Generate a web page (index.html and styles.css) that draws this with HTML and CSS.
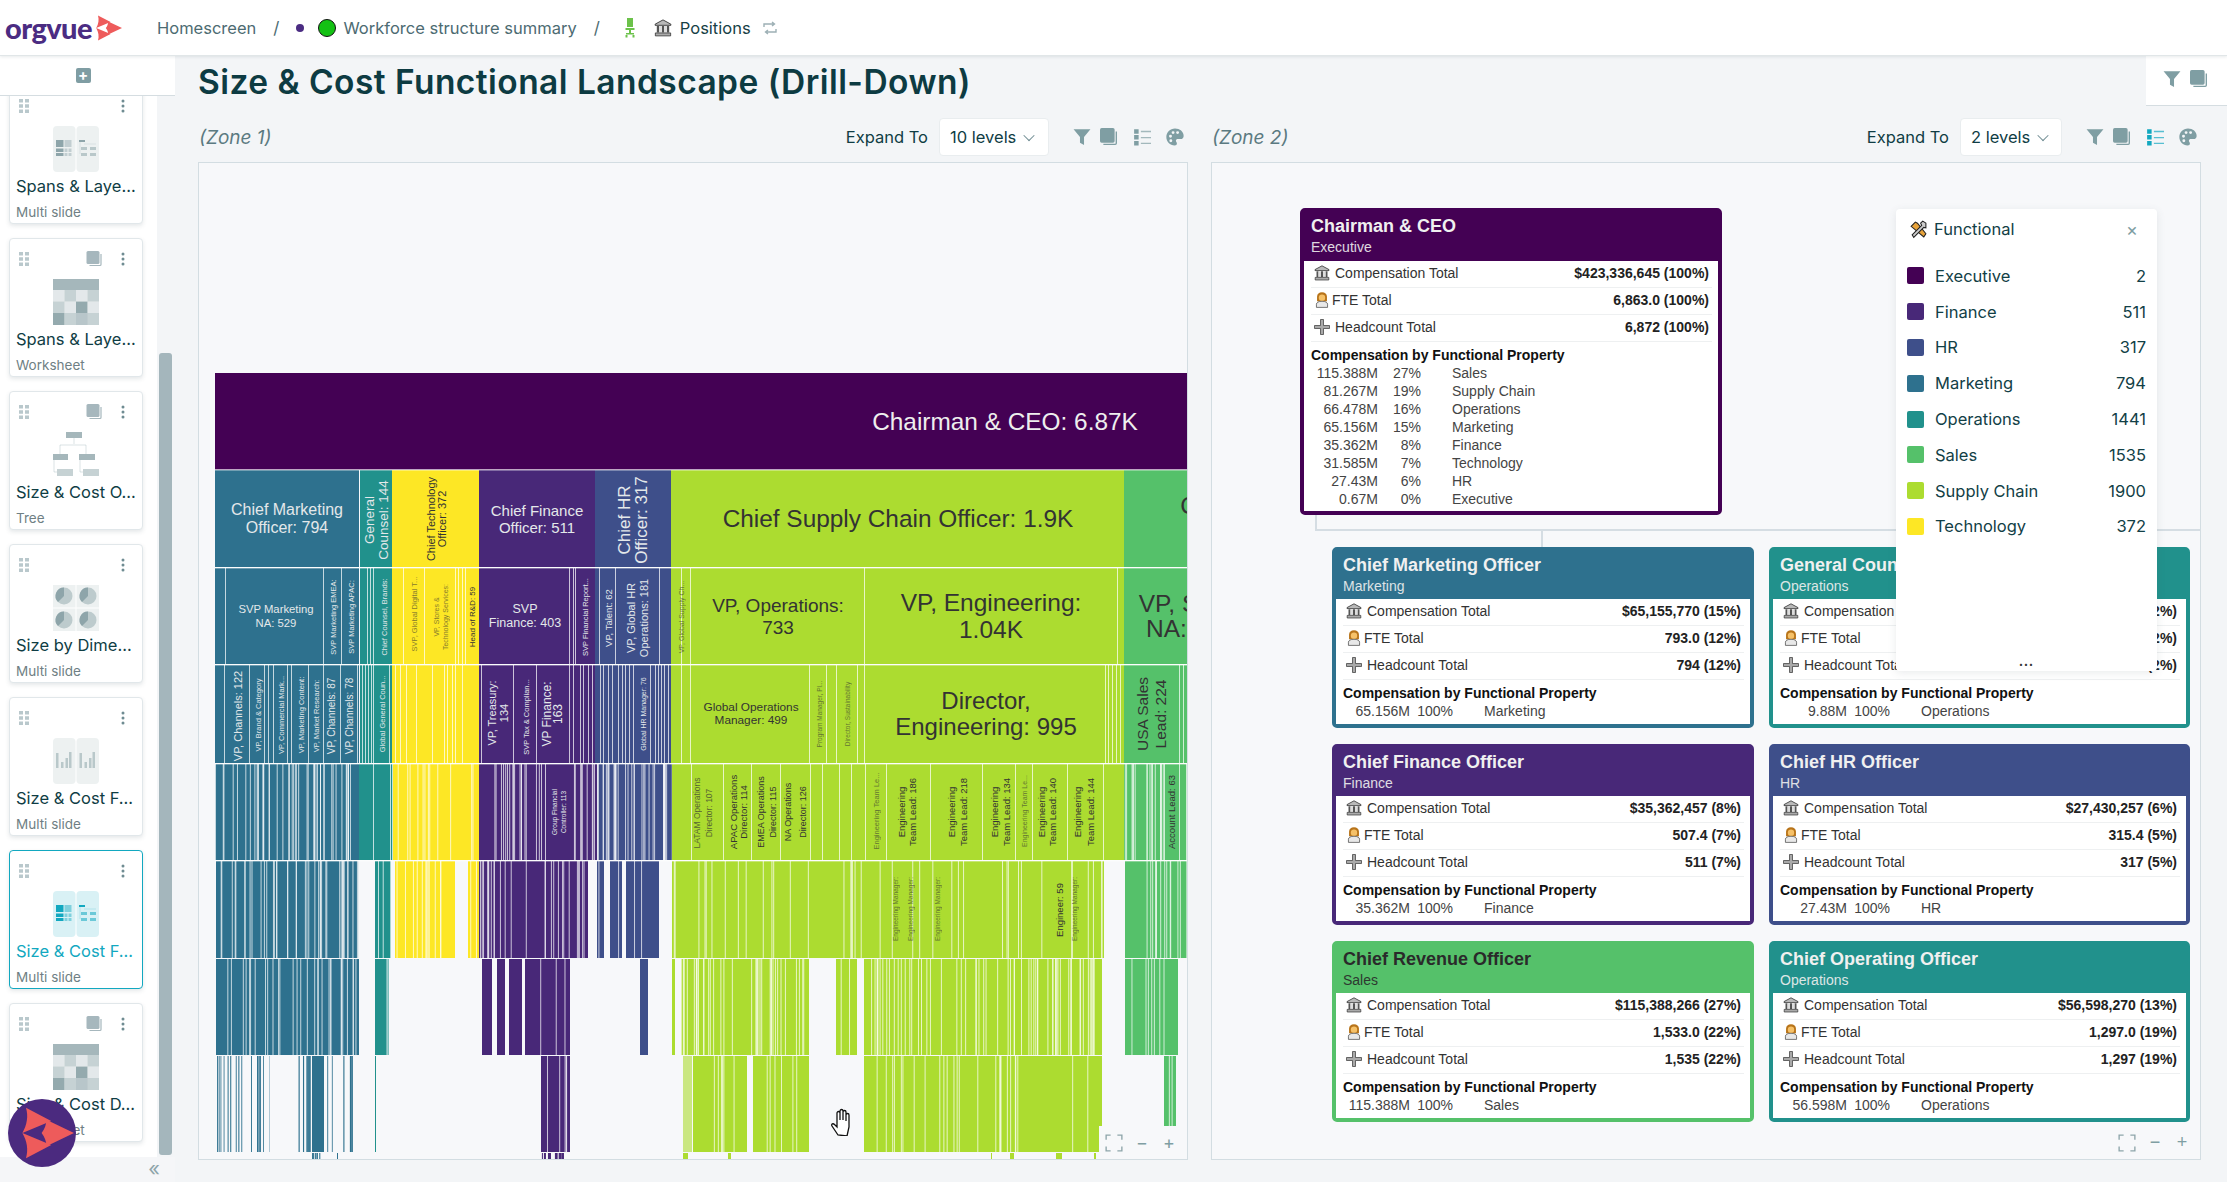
FILE: index.html
```html
<!DOCTYPE html>
<html>

<head>
	<meta charset="utf-8" />
	<title>Size &amp; Cost Functional Landscape (Drill-Down)</title>
	<link rel="stylesheet" href="styles.css">
</head>

<body>
	<svg class="defs" width="0" height="0">
		<symbol id="i-bank" viewBox="0 0 16 16">
			<path d="M8 .8 15 4.6v1H1v-1z" fill="#b9b9b9" stroke="#333" stroke-width=".8" />
			<path d="M2.5 6.3h2v5.8h-2zM7 6.3h2v5.8H7zM11.5 6.3h2v5.8h-2z" fill="#555" />
			<path d="M4.5 6.3H7v5.8H4.5zM9 6.3h2.5v5.8H9z" fill="#ddd" />
			<path d="M1.2 12.4h13.6v2.6H1.2z" fill="#aaa" stroke="#333" stroke-width=".7" />
		</symbol>
		<symbol id="i-person" viewBox="2.500 .5 11 15.500">
			<path d="M3.2 9.5V5.2C3.2 2.4 5.2.8 8 .8s4.800 1.600 4.800 4.400v4.300z" fill="#b8741a" />
			<circle cx="8" cy="6" r="3.100" fill="#f6c168" />
			<path d="M2.600 15.400v-3c0-1.800 2-2.900 5.400-2.900s5.400 1.100 5.400 2.900v3z" fill="#e8e8e8" stroke="#444" stroke-width=".7" />
		</symbol>
		<symbol id="i-plus" viewBox="0 0 16 16">
			<path d="M6.500 .5h3v6h6v3h-6v6h-3v-6h-6v-3h6z" fill="#a9a9a9" stroke="#333" stroke-width=".7" />
		</symbol>
		<symbol id="i-filter" viewBox="0 0 16 16">
			<path d="M.5 1h15L9.800 8v7L6.200 13V8z" />
		</symbol>
		<symbol id="i-copy" viewBox="0 0 16 16">
			<rect x="0" y="0" width="13" height="13" rx="1.500" />
			<path d="M14.500 3v10.500a1 1 0 0 1-1 1H3" fill="none" stroke="currentColor" stroke-width="1.200" />
		</symbol>
		<symbol id="i-list" viewBox="0 0 16 16">
			<path d="M1 1h4v4H1zM1 6.200h4v4H1zM1 11.500h4v4H1z" />
			<path d="M7 2.500h9v1.200H7zM7 8h9v1.200H7zM7 13h9v1.200H7z" opacity=".7" />
		</symbol>
		<symbol id="i-palette" viewBox="0 0 16 16">
			<path fill-rule="evenodd" d="M8 .5C3.600.5.300 3.800.300 8s3.300 7.500 7.400 7.500c1.300 0 2-.8 2-1.800 0-1.100-.9-1.500-.9-2.400 0-1 .8-1.500 1.800-1.500h2.400c1.500 0 2.700-1 2.700-2.800C15.700 3.300 12.300.5 8 .5zM4 6a1.300 1.300 0 1 0 0 2.600A1.300 1.300 0 0 0 4 6zm2.300-3.200a1.300 1.300 0 1 0 0 2.600 1.300 1.300 0 0 0 0-2.600zm4 0a1.300 1.300 0 1 0 0 2.600 1.300 1.300 0 0 0 0-2.600zm-6 7.200a1.300 1.300 0 1 0 0 2.600 1.300 1.300 0 0 0 0-2.600z" />
		</symbol>
		<symbol id="i-drag" viewBox="0 0 10 14">
			<path d="M0 0h4v3.500H0zM6 0h4v3.500H6zM0 5.300h4v3.500H0zM6 5.300h4v3.500H6zM0 10.500h4V14H0zM6 10.500h4V14H6z" />
		</symbol>
		<symbol id="i-more" viewBox="0 0 4 14">
			<circle cx="2" cy="2" r="1.500" /><circle cx="2" cy="7" r="1.500" /><circle cx="2" cy="12" r="1.500" />
		</symbol>
		<symbol id="i-mark" viewBox="0 0 100 100">
			<path d="M20 8 62 30 14 50C22 36 24 22 20 8z" />
			<path d="M14 50 62 70 20 92C24 78 22 64 14 50z" />
			<path d="M46 50c5-6 8-14 8-22l46 22-46 22c0-8-3-16-8-22z" />
		</symbol>
		<symbol id="t-multi" viewBox="0 0 46 46">
			<rect x="0" y="0" width="22.500" height="46" rx="4" class="thumb-bg" />
			<rect x="23.500" y="0" width="22.500" height="46" rx="4" class="thumb-bg" />
			<path d="M3 14h7.500v7H3zM3 22.500h7.500v3.500H3zM3 27h7.500v3H3z" />
			<path d="M11.500 14h7v7h-7zM11.500 22.500h3v3.500h-3zM15.500 22.500h3v3.500h-3zM11.500 27h3v3h-3zM15.500 27h3v3h-3z" opacity=".45" />
			<path d="M26 14h6v2h-6z" />
			<path d="M28 21h6v3h-6zM37 21h6v3h-6zM28 27h6v3h-6zM37 27h6v3h-6z" opacity=".55" />
			<path d="M27 16v12M31 18h12" stroke="currentColor" stroke-width=".5" fill="none" opacity=".4" />
		</symbol>
		<symbol id="t-grid" viewBox="0 0 46 46">
			<path d="M0 0h46v11H0z" opacity=".8" />
			<path d="M11.500 11H23v11.500H11.500zM34.500 11H46v11.500H34.500zM0 22.500h11.500V34H0zM11.500 34H0M23 34h11.500v12H23zM34.500 34H46v12H34.500zM11.500 34H23v12H11.500z" opacity=".5" />
			<path d="M0 11h11.500v11.500H0zM23 11h11.500v11.500H23zM11.500 22.500H23V34H11.500zM34.500 22.500H46V34H34.500zM23 34h11.500v12H23z" opacity=".25" />
			<path d="M23 22.500h11.500V34H23zM0 34h11.500v12H0z" opacity=".95" />
		</symbol>
		<symbol id="t-tree" viewBox="0 0 46 46">
			<path d="M13 0h16v6H13zM0 22h15v6H0zM26 22h16v6H26z" opacity=".8" />
			<path d="M4 37h16v7H4zM30 37h16v7H30z" opacity=".5" />
			<path d="M21 6v6M7 22v-9h26v9M1 28v12h3M27 28v12h3" fill="none" stroke="currentColor" stroke-width=".8" opacity=".4" />
		</symbol>
		<symbol id="t-pies" viewBox="0 0 46 46">
			<rect x="0" y="0" width="22.500" height="22.500" class="thumb-bg" />
			<rect x="23.500" y="0" width="22.500" height="22.500" class="thumb-bg" />
			<rect x="0" y="23.500" width="22.500" height="22.500" class="thumb-bg" />
			<rect x="23.500" y="23.500" width="22.500" height="22.500" class="thumb-bg" />
			<circle cx="11" cy="11" r="8.500" opacity=".5" /><path d="M11 11V2.500A8.500 8.500 0 0 0 5 17z" />
			<circle cx="35" cy="11" r="8.500" opacity=".5" /><path d="M35 11V2.500A8.500 8.500 0 0 0 29 17z" />
			<circle cx="11" cy="35" r="8.500" opacity=".5" /><path d="M11 35V26.500A8.500 8.500 0 0 0 5 41z" />
			<circle cx="35" cy="35" r="8.500" opacity=".5" /><path d="M35 35V26.500A8.500 8.500 0 0 0 29 41z" />
		</symbol>
		<symbol id="t-bars" viewBox="0 0 46 46">
			<rect x="0" y="0" width="22.500" height="46" rx="4" class="thumb-bg" />
			<rect x="23.500" y="0" width="22.500" height="46" rx="4" class="thumb-bg" />
			<path d="M3 15h2.500v15H3zM8 24h2.500v6H8zM12.500 20H15v10h-2.500zM16 14h2.500v16H16z" opacity=".55" />
			<path d="M26.500 15H29v15h-2.500zM31.500 24H34v6h-2.500zM36 20h2.500v10H36zM39.500 14H42v16h-2.500z" opacity=".55" />
		</symbol>
	</svg>

	<header class="topbar">
		<div class="logo">
			<span class="logo-name">orgvue</span>
			<svg class="logo-mark"><use href="#i-mark" /></svg>
		</div>
		<nav class="crumbs">
			<span class="crumb">Homescreen</span>
			<span class="slash">/</span>
			<span class="dot"></span>
			<span class="green"></span>
			<span class="crumb crumb-tight">Workforce structure summary</span>
			<span class="slash">/</span>
			<svg class="chair" viewBox="0 0 12 20"><path d="M3 0h6v9H3zM1.500 10h9v2h-9zM5 12h2v3H5zM2 15h8v1.500H2zM1.500 17h2v2.500h-2zM8.500 17h2v2.500h-2z" /></svg>
			<svg class="bank"><use href="#i-bank" /></svg>
			<span class="crumb-now">Positions</span>
			<svg class="refresh" viewBox="0 0 16 16"><path d="M2 7V4h10M10 2l2.500 2L10 6M14 9v3H4M6 10l-2.500 2L6 14" /></svg>
		</nav>
	</header>

	<div class="page">
		<aside class="sidebar">
			<div class="add-row"><span class="add-btn">+</span></div>
			<div class="side-scroll">
				<div class="cards">
					<div class="card">
						<div class="card-top"><svg class="drag"><use href="#i-drag" /></svg><svg class="more"><use href="#i-more" /></svg></div>
						<svg class="thumb"><use href="#t-multi" /></svg>
						<div class="card-name">Spans &amp; Laye...</div>
						<div class="card-type">Multi slide</div>
					</div>
					<div class="card">
						<div class="card-top"><svg class="drag"><use href="#i-drag" /></svg><svg class="dup"><use href="#i-copy" /></svg><svg class="more"><use href="#i-more" /></svg></div>
						<svg class="thumb"><use href="#t-grid" /></svg>
						<div class="card-name">Spans &amp; Laye...</div>
						<div class="card-type">Worksheet</div>
					</div>
					<div class="card">
						<div class="card-top"><svg class="drag"><use href="#i-drag" /></svg><svg class="dup"><use href="#i-copy" /></svg><svg class="more"><use href="#i-more" /></svg></div>
						<svg class="thumb"><use href="#t-tree" /></svg>
						<div class="card-name">Size &amp; Cost O...</div>
						<div class="card-type">Tree</div>
					</div>
					<div class="card">
						<div class="card-top"><svg class="drag"><use href="#i-drag" /></svg><svg class="more"><use href="#i-more" /></svg></div>
						<svg class="thumb"><use href="#t-pies" /></svg>
						<div class="card-name">Size by Dime...</div>
						<div class="card-type">Multi slide</div>
					</div>
					<div class="card">
						<div class="card-top"><svg class="drag"><use href="#i-drag" /></svg><svg class="more"><use href="#i-more" /></svg></div>
						<svg class="thumb"><use href="#t-bars" /></svg>
						<div class="card-name">Size &amp; Cost F...</div>
						<div class="card-type">Multi slide</div>
					</div>
					<div class="card on">
						<div class="card-top"><svg class="drag"><use href="#i-drag" /></svg><svg class="more"><use href="#i-more" /></svg></div>
						<svg class="thumb"><use href="#t-multi" /></svg>
						<div class="card-name">Size &amp; Cost F...</div>
						<div class="card-type">Multi slide</div>
					</div>
					<div class="card">
						<div class="card-top"><svg class="drag"><use href="#i-drag" /></svg><svg class="dup"><use href="#i-copy" /></svg><svg class="more"><use href="#i-more" /></svg></div>
						<svg class="thumb"><use href="#t-grid" /></svg>
						<div class="card-name">Size &amp; Cost D...</div>
						<div class="card-type">Worksheet</div>
					</div>
				</div>
				<div class="track"><div class="thumb-bar"></div></div>
			</div>
			<div class="side-foot">«</div>
			<div class="fab"><svg><use href="#i-mark" /></svg></div>
		</aside>

		<main class="main">
			<h1 class="title">Size &amp; Cost Functional Landscape (Drill-Down)</h1>
			<div class="corner-tab">
				<svg class="tool"><use href="#i-filter" /></svg>
				<svg class="tool"><use href="#i-copy" /></svg>
			</div>
			<div class="zones">
				<section class="zone">
					<div class="zone-head">
						<em class="zone-name">(Zone 1)</em>
						<span class="expand">Expand To</span>
						<span class="select">10 levels<i class="chev"></i></span>
						<div class="tools">
							<svg class="tool"><use href="#i-filter" /></svg>
							<svg class="tool copy"><use href="#i-copy" /></svg>
							<svg class="tool"><use href="#i-list" /></svg>
							<svg class="tool"><use href="#i-palette" /></svg>
						</div>
					</div>
					<div class="panel">
						<svg id="icicle" class="icicle" viewBox="199 163 988 996"></svg>
						<svg class="hand" viewBox="0 0 28 28"><path d="M9 27 3 18c-1-2 1-3 2.500-1.500L8 19V5c0-2 3-2 3 0v7-9c0-2 3-2 3 0v9-8c0-2 3-2 3 0v9-6c0-2 3-2 3 0v12l-2 9z" /></svg>
						<div class="zoom-box">
							<svg class="fit" viewBox="0 0 16 16"><path d="M1 5V1h4M11 1h4v4M15 11v4h-4M5 15H1v-4" /></svg>
							<span>−</span><span>+</span>
						</div>
					</div>
				</section>

				<section class="zone">
					<div class="zone-head">
						<em class="zone-name">(Zone 2)</em>
						<span class="expand">Expand To</span>
						<span class="select select-sm">2 levels<i class="chev"></i></span>
						<div class="tools">
							<svg class="tool"><use href="#i-filter" /></svg>
							<svg class="tool copy"><use href="#i-copy" /></svg>
							<svg class="tool active"><use href="#i-list" /></svg>
							<svg class="tool"><use href="#i-palette" /></svg>
						</div>
					</div>
					<div class="panel org">
						<div class="link link-v link-root"></div>
						<div class="link link-h"></div>
						<div class="link link-v link-a"></div>
						<div class="link link-v link-b"></div>

						<div class="node root c-exec">
							<div class="node-head"><b>Chairman &amp; CEO</b><span>Executive</span></div>
							<div class="node-body">
								<div class="row"><svg class="ico"><use href="#i-bank" /></svg><span class="lab">Compensation Total</span><b>$423,336,645 (100%)</b></div>
								<div class="row"><svg class="ico"><use href="#i-person" /></svg><span class="lab fte">FTE Total</span><b>6,863.0 (100%)</b></div>
								<div class="row"><svg class="ico"><use href="#i-plus" /></svg><span class="lab">Headcount Total</span><b>6,872 (100%)</b></div>
								<div class="split">
									<b class="split-title">Compensation by Functional Property</b>
									<span>115.388M</span><span>27%</span><span>Sales</span>
									<span>81.267M</span><span>19%</span><span>Supply Chain</span>
									<span>66.478M</span><span>16%</span><span>Operations</span>
									<span>65.156M</span><span>15%</span><span>Marketing</span>
									<span>35.362M</span><span>8%</span><span>Finance</span>
									<span>31.585M</span><span>7%</span><span>Technology</span>
									<span>27.43M</span><span>6%</span><span>HR</span>
									<span>0.67M</span><span>0%</span><span>Executive</span>
								</div>
							</div>
						</div>

						<div class="node-grid">
							<div class="node c-mark">
								<div class="node-head"><b>Chief Marketing Officer</b><span>Marketing</span></div>
								<div class="node-body">
									<div class="row"><svg class="ico"><use href="#i-bank" /></svg><span class="lab">Compensation Total</span><b>$65,155,770 (15%)</b></div>
									<div class="row"><svg class="ico"><use href="#i-person" /></svg><span class="lab fte">FTE Total</span><b>793.0 (12%)</b></div>
									<div class="row"><svg class="ico"><use href="#i-plus" /></svg><span class="lab">Headcount Total</span><b>794 (12%)</b></div>
									<div class="split"><b class="split-title">Compensation by Functional Property</b><span>65.156M</span><span>100%</span><span>Marketing</span></div>
								</div>
							</div>
							<div class="node c-oper">
								<div class="node-head"><b>General Counsel</b><span>Operations</span></div>
								<div class="node-body">
									<div class="row"><svg class="ico"><use href="#i-bank" /></svg><span class="lab">Compensation Total</span><b>$9,880,000 (2%)</b></div>
									<div class="row"><svg class="ico"><use href="#i-person" /></svg><span class="lab fte">FTE Total</span><b>144.0 (2%)</b></div>
									<div class="row"><svg class="ico"><use href="#i-plus" /></svg><span class="lab">Headcount Total</span><b>144 (2%)</b></div>
									<div class="split"><b class="split-title">Compensation by Functional Property</b><span>9.88M</span><span>100%</span><span>Operations</span></div>
								</div>
							</div>
							<div class="node c-fin">
								<div class="node-head"><b>Chief Finance Officer</b><span>Finance</span></div>
								<div class="node-body">
									<div class="row"><svg class="ico"><use href="#i-bank" /></svg><span class="lab">Compensation Total</span><b>$35,362,457 (8%)</b></div>
									<div class="row"><svg class="ico"><use href="#i-person" /></svg><span class="lab fte">FTE Total</span><b>507.4 (7%)</b></div>
									<div class="row"><svg class="ico"><use href="#i-plus" /></svg><span class="lab">Headcount Total</span><b>511 (7%)</b></div>
									<div class="split"><b class="split-title">Compensation by Functional Property</b><span>35.362M</span><span>100%</span><span>Finance</span></div>
								</div>
							</div>
							<div class="node c-hr">
								<div class="node-head"><b>Chief HR Officer</b><span>HR</span></div>
								<div class="node-body">
									<div class="row"><svg class="ico"><use href="#i-bank" /></svg><span class="lab">Compensation Total</span><b>$27,430,257 (6%)</b></div>
									<div class="row"><svg class="ico"><use href="#i-person" /></svg><span class="lab fte">FTE Total</span><b>315.4 (5%)</b></div>
									<div class="row"><svg class="ico"><use href="#i-plus" /></svg><span class="lab">Headcount Total</span><b>317 (5%)</b></div>
									<div class="split"><b class="split-title">Compensation by Functional Property</b><span>27.43M</span><span>100%</span><span>HR</span></div>
								</div>
							</div>
							<div class="node c-sales">
								<div class="node-head"><b>Chief Revenue Officer</b><span>Sales</span></div>
								<div class="node-body">
									<div class="row"><svg class="ico"><use href="#i-bank" /></svg><span class="lab">Compensation Total</span><b>$115,388,266 (27%)</b></div>
									<div class="row"><svg class="ico"><use href="#i-person" /></svg><span class="lab fte">FTE Total</span><b>1,533.0 (22%)</b></div>
									<div class="row"><svg class="ico"><use href="#i-plus" /></svg><span class="lab">Headcount Total</span><b>1,535 (22%)</b></div>
									<div class="split"><b class="split-title">Compensation by Functional Property</b><span>115.388M</span><span>100%</span><span>Sales</span></div>
								</div>
							</div>
							<div class="node c-oper">
								<div class="node-head"><b>Chief Operating Officer</b><span>Operations</span></div>
								<div class="node-body">
									<div class="row"><svg class="ico"><use href="#i-bank" /></svg><span class="lab">Compensation Total</span><b>$56,598,270 (13%)</b></div>
									<div class="row"><svg class="ico"><use href="#i-person" /></svg><span class="lab fte">FTE Total</span><b>1,297.0 (19%)</b></div>
									<div class="row"><svg class="ico"><use href="#i-plus" /></svg><span class="lab">Headcount Total</span><b>1,297 (19%)</b></div>
									<div class="split"><b class="split-title">Compensation by Functional Property</b><span>56.598M</span><span>100%</span><span>Operations</span></div>
								</div>
							</div>
						</div>

						<div class="legend">
							<div class="legend-head">
								<svg class="tools-ico" viewBox="0 0 18 18">
									<path d="M2 6 6 2l2 1 8 10-2 3z" fill="#e8a33a" stroke="#222" stroke-width="1" />
									<path d="M16 3 13 1l-2 2 1 2L3 14l1.500 2.500L14 7l2 .5z" fill="#ccc" stroke="#222" stroke-width="1" />
								</svg>
								<span>Functional</span>
								<span class="legend-x">×</span>
							</div>
							<div class="legend-row"><i class="sw c-exec"></i><span>Executive</span><span class="num">2</span></div>
							<div class="legend-row"><i class="sw c-fin"></i><span>Finance</span><span class="num">511</span></div>
							<div class="legend-row"><i class="sw c-hr"></i><span>HR</span><span class="num">317</span></div>
							<div class="legend-row"><i class="sw c-mark"></i><span>Marketing</span><span class="num">794</span></div>
							<div class="legend-row"><i class="sw c-oper"></i><span>Operations</span><span class="num">1441</span></div>
							<div class="legend-row"><i class="sw c-sales"></i><span>Sales</span><span class="num">1535</span></div>
							<div class="legend-row"><i class="sw c-supply"></i><span>Supply Chain</span><span class="num">1900</span></div>
							<div class="legend-row"><i class="sw c-tech"></i><span>Technology</span><span class="num">372</span></div>
							<div class="legend-more">•••</div>
						</div>

						<div class="zoom-box">
							<svg class="fit" viewBox="0 0 16 16"><path d="M1 5V1h4M11 1h4v4M15 11v4h-4M5 15H1v-4" /></svg>
							<span>−</span><span>+</span>
						</div>
					</div>
				</section>
			</div>
		</main>
	</div>
	<script src="chart.js"></script>
</body>

</html>
```

FILE: styles.css
```css
* {
	box-sizing: border-box;
	padding: 0;
	margin: 0;
}

html,
body {
	width: 2227px;
	height: 1182px;
	overflow: hidden;
}

body {
	background: #f3f5f7;
	font-family: Inter, "Liberation Sans", sans-serif;
	color: #0f3d44;
}

.defs {
	position: absolute;
}

.thumb-bg {
	opacity: .16;
}

/* top bar */
.topbar {
	display: flex;
	align-items: center;
	height: 56px;
	background: #fff;
	border-bottom: 1px solid #e1e6e8;
	box-shadow: 0 1px 3px rgba(60, 80, 90, .12);
	position: relative;
	z-index: 3;
}

.logo {
	display: flex;
	align-items: center;
	width: 157px;
	padding-left: 5px;
}

.logo-name {
	font-family: Lato, sans-serif;
	font-weight: 900;
	font-size: 29px;
	letter-spacing: -.6px;
	color: #4b2c82;
}

.logo-mark {
	width: 30px;
	height: 30px;
	fill: #ee5b5b;
}

.crumbs {
	display: flex;
	align-items: center;
	font-size: 16.500px;
	color: #4d6b72;
}

.slash {
	margin: 0 17px;
	font-size: 17px;
}

.dot {
	width: 8px;
	height: 8px;
	border-radius: 50%;
	background: #4b2c82;
	margin-right: 14px;
}

.green {
	width: 18px;
	height: 18px;
	border-radius: 50%;
	background: #14c114;
	border: 1px solid #111;
	margin-right: 7px;
}

.chair {
	width: 12px;
	height: 20px;
	fill: #6cc24a;
	margin: 0 18px 0 7px;
}

.bank {
	width: 18px;
	height: 20px;
	margin-right: 8px;
}

.crumb-now {
	color: #173f46;
}

.refresh {
	width: 16px;
	height: 16px;
	margin-left: 11px;
	fill: none;
	stroke: #9db0b5;
	stroke-width: 1.4;
}

/* sidebar */
.page {
	display: flex;
	height: 1126px;
}

.sidebar {
	position: relative;
	width: 175px;
	display: flex;
	flex-direction: column;
	flex-shrink: 0;
	background: #fff;
}

.add-row {
	height: 40px;
	border-bottom: 1px solid #d5dde1;
	display: flex;
	align-items: center;
	justify-content: center;
	padding-right: 9px;
	position: relative;
	z-index: 1;
	background: #fff;
}

.add-btn {
	width: 15px;
	height: 15px;
	border-radius: 2px;
	background: #7f9da3;
	color: #fff;
	font-size: 15px;
	line-height: 14px;
	font-weight: 700;
	text-align: center;
}

.side-scroll {
	display: flex;
	height: 1061px;
	overflow: hidden;
}

.cards {
	width: 157px;
	padding-left: 9px;
	margin-top: -11px;
	flex-shrink: 0;
}

.card {
	width: 134px;
	height: 139px;
	margin-bottom: 14px;
	padding: 12px 16px 0 6px;
	background: #fff;
	border: 1px solid #e1e7ea;
	border-radius: 4px;
	box-shadow: 0 2px 4px rgba(70, 90, 100, .14);
	color: #8ea5aa;
}

.card.on {
	border-color: #12a8c0;
	color: #12a8c0;
}

.card-top {
	display: flex;
	align-items: center;
	height: 16px;
}

.drag {
	width: 10px;
	height: 14px;
	margin-left: 3px;
	fill: #b9c8cc;
}

.dup {
	width: 17px;
	height: 16px;
	margin-left: auto;
	fill: #a6b7bd;
	color: #a6b7bd;
}

.more {
	width: 4px;
	height: 14px;
	margin-left: auto;
	margin-right: 1px;
	fill: #6f8c92;
}

.dup + .more {
	margin-left: 18px;
}

.thumb {
	display: block;
	width: 46px;
	height: 46px;
	margin: 12px auto 0 37px;
	fill: currentColor;
}

.card-name {
	margin-top: 4px;
	font-size: 16.500px;
	line-height: 20px;
	color: #0f3d44;
	white-space: nowrap;
}

.card.on .card-name {
	color: #12a8c0;
}

.card-type {
	margin-top: 8px;
	font-size: 13.500px;
	line-height: 16px;
	color: #6f7f84;
}

.track {
	width: 18px;
	padding: 257px 2px 0;
	background: #f3f5f7;
}

.thumb-bar {
	width: 13px;
	height: 802px;
	background: #a4b6bc;
	border-radius: 3px;
}

.side-foot {
	height: 25px;
	background: #f5f6f8;
	color: #8ea5aa;
	font-size: 20px;
	line-height: 25px;
	text-align: right;
	padding-right: 15px;
}

.fab {
	position: absolute;
	left: 8px;
	bottom: 15px;
	width: 68px;
	height: 68px;
	border-radius: 50%;
	background: #4b2a7f;
	padding: 4px 2px 4px 6px;
	fill: #ee5b5b;
}

.fab svg {
	display: block;
	width: 60px;
	height: 60px;
}

/* main */
.main {
	position: relative;
	flex: 1;
	padding: 0 26px 0 23px;
}

.title {
	height: 62px;
	padding-top: 6px;
	font-size: 33.500px;
	line-height: 40px;
	font-weight: 600;
	letter-spacing: .45px;
	color: #0d3b42;
}

.corner-tab {
	position: absolute;
	right: 0;
	top: 0;
	width: 81px;
	height: 50px;
	background: #fff;
	border-bottom: 1px solid #d5dde1;
	display: flex;
	gap: 9px;
	padding: 14px 0 0 17px;
}

.zones {
	display: grid;
	grid-template-columns: 990px 990px;
	gap: 23px;
}

.zone-head {
	display: flex;
	align-items: center;
	height: 38px;
	margin-bottom: 6px;
	padding-right: 4px;
}

.zone-name {
	margin-right: auto;
	margin-left: 1px;
	font-size: 19px;
	color: #5b7a81;
}

.expand {
	font-size: 16.500px;
	margin-right: 11px;
}

.select {
	display: flex;
	align-items: center;
	width: 110px;
	height: 38px;
	padding-left: 10px;
	background: #fff;
	border: 1px solid #e9edef;
	border-radius: 4px;
	font-size: 16.500px;
}

.select-sm {
	width: 102px;
}

.chev {
	width: 8px;
	height: 8px;
	margin-left: 9px;
	border-right: 1px solid #6f8c92;
	border-bottom: 1px solid #6f8c92;
	transform: rotate(45deg) translate(-1px, -1px);
}

.tools {
	display: flex;
	margin-left: 9px;
}

.tool {
	width: 18px;
	height: 18px;
	margin-left: 15px;
	fill: #7f9ea3;
	color: #7f9ea3;
}

.tool.copy {
	margin-left: 9px;
}

.tool.active {
	fill: #12a8c0;
	color: #12a8c0;
}

.corner-tab .tool {
	margin-left: 0;
}

.panel {
	position: relative;
	height: 998px;
	background: #f7f8fa;
	border: 1px solid #d3dde2;
	overflow: hidden;
}

.icicle {
	display: block;
	width: 988px;
	height: 996px;
	font-family: "Liberation Sans", Arial, sans-serif;
}

.hand {
	position: absolute;
	left: 630px;
	top: 945px;
	width: 28px;
	height: 28px;
	fill: #fff;
	stroke: #111;
	stroke-width: 1.3;
}

.zoom-box {
	position: absolute;
	right: 0;
	bottom: 0;
	display: flex;
	align-items: center;
	width: 88px;
	height: 33px;
	padding-left: 6px;
	gap: 15px;
	background: #f7f8fa;
	color: #7f9ea3;
	font-size: 18px;
}

.zoom-box span {
	width: 12px;
	text-align: center;
}

.fit {
	width: 18px;
	height: 18px;
	margin-right: -2px;
	fill: none;
	stroke: #8ea5aa;
	stroke-width: 1.2;
}

/* org tree */
.org {
	font-family: "Liberation Sans", Arial, sans-serif;
	color: #333;
}

.link {
	position: absolute;
	background: #d5dde3;
}

.link-v {
	width: 2px;
}

.link-root {
	left: 103px;
	top: 350px;
	height: 17px;
}

.link-h {
	left: 103px;
	right: 0;
	top: 366px;
	height: 2px;
}

.link-a {
	left: 329px;
	top: 366px;
	height: 18px;
}

.link-b {
	left: 767px;
	top: 366px;
	height: 18px;
}

.node {
	position: relative;
	display: flex;
	flex-direction: column;
	border: 4px solid var(--c);
	border-radius: 5px;
	background: var(--c);
	color: #f0f0f0;
}

.root {
	width: 422px;
	height: 307px;
	margin: 45px 0 0 88px;
}

.node-grid {
	display: grid;
	grid-template-columns: 422px 421px;
	grid-auto-rows: 181px;
	gap: 16px 15px;
	margin: 32px 0 0 120px;
}

.c-exec { --c: #440154; background: #440154; }
.c-fin { --c: #482878; background: #482878; }
.c-hr { --c: #3e4f8a; background: #3e4f8a; }
.c-mark { --c: #2e718e; background: #2e718e; }
.c-oper { --c: #21918c; background: #21918c; }
.c-sales { --c: #55c16a; background: #55c16a; color: #2a2a2a; }
.c-supply { --c: #acdc30; background: #acdc30; }
.c-tech { --c: #fde725; background: #fde725; }

.node-head {
	display: flex;
	flex-direction: column;
	height: 48px;
	padding: 4px 0 0 7px;
}

.root .node-head {
	height: 49px;
}

.node-head b {
	font-size: 18px;
	line-height: 21px;
}

.node-head span {
	font-size: 14px;
	line-height: 20px;
	opacity: .9;
}

.node-body {
	flex: 1;
	padding: 0 6px 0 7px;
	background: #fff;
	color: #333;
	font-size: 14px;
}

.row {
	display: flex;
	align-items: center;
	height: 27px;
	padding: 0 3px 2px;
	border-bottom: 1px solid #eef0f1;
}

.row b {
	margin-left: auto;
	color: #222;
}

.ico {
	width: 16px;
	height: 16px;
	flex-shrink: 0;
	margin-right: 5px;
}

.lab.fte {
	margin-left: -3px;
}

.split {
	display: grid;
	grid-template-columns: 67px 43px auto;
	padding-top: 4px;
	line-height: 18px;
	color: #444;
}

.split-title {
	grid-column: 1 / -1;
	color: #111;
}

.split span:nth-of-type(3n + 1),
.split span:nth-of-type(3n + 2) {
	text-align: right;
}

.split span:nth-of-type(3n) {
	padding-left: 31px;
}

.legend {
	position: absolute;
	left: 684px;
	top: 46px;
	display: flex;
	flex-direction: column;
	width: 261px;
	height: 462px;
	padding: 0 11px;
	background: #fff;
	border-radius: 4px;
	box-shadow: 0 2px 8px rgba(70, 90, 100, .12);
	font-family: Inter, "Liberation Sans", sans-serif;
	font-size: 16.500px;
	color: #124046;
	z-index: 2;
}

.legend-head {
	display: flex;
	align-items: center;
	height: 49px;
	padding: 0 0 9px 2px;
	flex-shrink: 0;
}

.tools-ico {
	width: 19px;
	height: 19px;
	margin-right: 6px;
}

.legend-x {
	margin-left: auto;
	margin-right: 8px;
	color: #7f9ea3;
	font-size: 18px;
}

.legend-row {
	display: flex;
	align-items: center;
	height: 35.800px;
	flex-shrink: 0;
}

.sw {
	width: 17px;
	height: 17px;
	border-radius: 2px;
	margin-right: 11px;
}

.num {
	margin-left: auto;
}

.legend-more {
	margin-top: auto;
	padding-bottom: 1px;
	text-align: center;
	font-size: 7px;
	letter-spacing: 1px;
	line-height: 10px;
	color: #333;
}
```

FILE: chart.js
```js
// icicle chart of the org, coordinates are page pixels
var colors = {
	e: "#440154", f: "#482878", h: "#3e4f8a", m: "#2e718e",
	o: "#21918c", r: "#55c16a", s: "#acdc30", t: "#fde725"
}
var L = "#e4e8ea"
var D = "#333"
var seed = 7

function rnd() {
	seed = (seed * 16807) % 2147483647
	return seed / 2147483647
}

function rect(x0, x1, y0, y1, fill, op) {
	return '<rect x="' + x0 + '" y="' + y0 + '" width="' + (x1 - x0) + '" height="' + (y1 - y0) + '" fill="' + fill + '"' + (op ? ' opacity="' + op + '"' : '') + '/>'
}

// block = [x0, x1, colour, dividers], dividers is a list of x or a count of random ones
function block(b, y0, y1) {
	var out = rect(b[0], b[1], y0, y1, colors[b[2]])
	var div = b[3] || []
	if (typeof div == "number") {
		var n = div
		div = []
		for (var i = 0; i < n; i++) {
			div.push(b[0] + rnd() * (b[1] - b[0]))
		}
	}
	for (var j = 0; j < div.length; j++) {
		out += rect(div[j], div[j] + 1, y0, y1, "#fff", .72)
	}
	return out
}

// thin separate bars of a colour, no block behind
function bars(x0, x1, y0, y1, c, n, w) {
	var out = ""
	for (var i = 0; i < n; i++) {
		var x = x0 + rnd() * (x1 - x0)
		out += rect(x, Math.min(x + .8 + rnd() * w, x1), y0, y1, colors[c])
	}
	return out
}

var rows = [
	[470, 567, [[215, 359, "m"], [360, 392, "o"], [392, 479, "t"], [479, 595, "f"], [595, 671, "h"], [671, 1124, "s"], [1124, 1188, "r"]]],
	[568, 664, [
		[215, 359, "m", [225, 323, 341]], [360, 392, "o", [367, 370, 373]],
		[392, 479, "t", [403, 424, 455, 458, 462, 465]], [479, 595, "f", [569, 573, 575]],
		[595, 671, "h", [599, 615, 659]], [671, 1124, "s", [681, 690, 864, 1117]], [1124, 1188, "r"]
	]],
	[665, 763, [
		[215, 359, "m", [224, 249, 264, 268, 273, 287, 291, 308, 323, 340, 357]], [360, 392, "o", [362, 365, 368, 371, 373, 389]],
		[392, 479, "t", [395, 400, 406, 416, 432, 444, 447, 452, 455, 462]],
		[479, 595, "f", [481, 513, 536, 569, 573, 580, 583, 588, 592]],
		[595, 671, "h", [600, 603, 608, 612, 618, 622, 625, 629, 633, 650, 655, 658, 661, 664, 668]],
		[671, 1124, "s", [681, 690, 809, 826, 836, 857, 864, 1105, 1108, 1112, 1116, 1120]],
		[1124, 1188, "r", [1179, 1183, 1187]]
	]],
	[764, 860, [
		[215, 359, "m", 46], [359, 393, "o", [373, 390, 392]], [393, 479, "t", 12],
		[479, 545, "f", 18], [545, 572, "f", [545]], [572, 597, "f", 9], [597, 672, "h", 34],
		[672, 1124, "s", [691, 723, 751, 780, 810, 822, 839, 851, 865, 886, 930, 982, 1015, 1032, 1067, 1103]],
		[1124, 1164, "r", 16], [1164, 1188, "r", [1164, 1179, 1186]]
	]],
	[861, 958, [
		[216, 359, "m", 42], [375, 391, "o", 3], [395, 455, "t", 12], [468, 479, "t", 2], [479, 588, "f", 26],
		[597, 604, "h", 1], [610, 622, "h", 1], [626, 659, "h", 2],
		[672, 1104, "s", 40], [1125, 1187, "r", 14]
	]],
	[959, 1055, [
		[216, 359, "m", 30], [375, 389, "o", 2], [482, 492, "f"], [497, 505, "f"], [509, 522, "f"], [525, 570, "f", 3], [640, 648, "h"],
		[672, 675, "s"], [681, 809, "s", 36], [836, 857, "s", 2], [864, 1102, "s", 60], [1125, 1178, "r", 7]
	]]
]

var html = rect(215, 1188, 373, 470, colors.e)
for (var i = 0; i < rows.length; i++) {
	for (var k = 0; k < rows[i][2].length; k++) {
		html += block(rows[i][2][k], rows[i][0], rows[i][1])
	}
}

// last full level, then the short stubs below it
html += bars(217, 270, 1056, 1152, "m", 16, .3)
html += bars(294, 312, 1056, 1152, "m", 7, .4)
html += rect(312, 324, 1056, 1152, colors.m)
html += bars(326, 356, 1056, 1152, "m", 7, .4)
html += rect(375, 376, 1056, 1152, colors.o)
html += block([541, 570, "f", 5], 1056, 1152)
html += rect(683, 692, 1056, 1152, colors.s, .6)
html += block([693, 747, "s", 6], 1056, 1152)
html += block([753, 809, "s", 6], 1056, 1152)
html += block([864, 1102, "s", 26], 1056, 1152)
html += block([1164, 1176, "r", 2], 1056, 1152)
html += bars(310, 321, 1153, 1159, "m", 6, 1)
html += rect(337, 338, 1153, 1159, colors.m)
html += bars(541, 565, 1153, 1159, "f", 8, 2)
html += rect(683, 688, 1153, 1159, colors.s) + rect(728, 731, 1153, 1159, colors.s)
html += rect(991, 992, 1153, 1159, colors.s) + rect(1010, 1014, 1153, 1159, colors.s)
html += rect(1056, 1062, 1153, 1159, colors.s) + rect(1094, 1096, 1153, 1159, colors.s)
html += rect(1164, 1175, 1153, 1159, colors.r)

// horizontal rules between levels
var ys = [469, 567, 664, 763, 860]
for (var y = 0; y < ys.length; y++) {
	html += rect(215, 1188, ys[y], ys[y] + 1.5, "#fff", .65)
}

// [text, x, y, size, rotated, colour, opacity]
var labels = [
	["Chairman & CEO: 6.87K", 1005, 421, 24.4, 0, "#eee"],
	["Chief Marketing", 287, 509, 16, 0, L], ["Officer: 794", 287, 527, 16, 0, L],
	["General", 369, 520, 13.5, 1, L], ["Counsel: 144", 383, 520, 13.5, 1, L],
	["Chief Technology", 431, 519, 11, 1, D], ["Officer: 372", 442, 519, 11, 1, D],
	["Chief Finance", 537, 510, 15, 0, L], ["Officer: 511", 537, 527, 15, 0, L],
	["Chief HR", 624, 520, 17, 1, L], ["Officer: 317", 641, 520, 17, 1, L],
	["Chief Supply Chain Officer: 1.9K", 898, 518, 24.4, 0, D],
	["Chief Revenue", 1261, 505, 24.4, 0, D],
	["SVP Marketing", 276, 609, 11.3, 0, L], ["NA: 529", 276, 623, 11.3, 0, L],
	["SVP Marketing EMEA:", 333, 617, 7.5, 1, L], ["SVP Marketing APAC:", 351, 617, 7.5, 1, L],
	["Chief Counsel, Brands:", 384, 617, 7.5, 1, L],
	["SVP, Global Digital T...", 414, 614, 7.5, 1, D, .6],
	["VP, Stores &", 436, 617, 7, 1, D, .6], ["Technology Services:", 445, 617, 7, 1, D, .6],
	["Head of R&D: 59", 472, 617, 8, 1, D],
	["SVP", 525, 609, 12.5, 0, L], ["Finance: 403", 525, 623, 12.5, 0, L],
	["SVP Financial Report...", 585, 617, 7.5, 1, L],
	["VP, Talent: 62", 608, 618, 9.5, 1, L],
	["VP, Global HR", 631, 618, 11, 1, L], ["Operations: 181", 644, 618, 11, 1, L],
	["VP, Global Supply Ch...", 681, 617, 7, 1, D, .6],
	["VP, Operations:", 778, 605, 19, 0, D], ["733", 778, 627, 19, 0, D],
	["VP, Engineering:", 991, 602, 24.5, 0, D], ["1.04K", 991, 629, 24.5, 0, D],
	["VP, Sales", 1191, 603, 24.5, 0, D], ["NA: 1.4K", 1195, 628, 24.5, 0, D],
	["VP, Channels: 122", 238, 716, 11, 1, L],
	["VP, Brand & Category", 258, 715, 7.5, 1, L],
	["VP, Commercial Mark...", 281, 715, 7.5, 1, L],
	["VP, Marketing Content:", 301, 715, 7.5, 1, L],
	["VP, Market Research:", 316, 716, 7.5, 1, L],
	["VP, Channels: 87", 331, 716, 10, 1, L], ["VP, Channels: 78", 349, 716, 10, 1, L],
	["Global General Coun...", 382, 714, 7.5, 1, L],
	["VP, Treasury:", 492, 713, 11, 1, L], ["134", 504, 713, 11, 1, L],
	["SVP Tax & Complian...", 526, 717, 7.5, 1, L],
	["VP Finance:", 547, 714, 12, 1, L], ["163", 558, 714, 12, 1, L],
	["Global HR Manager: 76", 643, 714, 7, 1, L],
	["Global Operations", 751, 707, 11.8, 0, D], ["Manager: 499", 751, 720, 11.8, 0, D],
	["Program Manager, Pl...", 819, 714, 6.5, 1, D, .6],
	["Director, Sustainability", 847, 714, 6.5, 1, D, .6],
	["Director,", 986, 700, 24, 0, D], ["Engineering: 995", 986, 726, 24, 0, D],
	["USA Sales", 1142, 714, 15.5, 1, D], ["Lead: 224", 1160, 714, 15.5, 1, D],
	["Group Financial", 554, 812, 6.5, 1, L], ["Controller: 113", 563, 812, 6.5, 1, L],
	["LATAM Operations", 697, 813, 8.5, 1, D, .7], ["Director: 107", 709, 813, 8.5, 1, D, .7],
	["APAC Operations", 733, 812, 9.5, 1, D], ["Director: 114", 743, 812, 9.5, 1, D],
	["EMEA Operations", 761, 812, 9, 1, D], ["Director: 115", 773, 812, 9, 1, D],
	["NA Operations", 788, 812, 9, 1, D], ["Director: 126", 803, 812, 9, 1, D],
	["Engineering Team Le...", 876, 811, 7.5, 1, D, .6],
	["Engineering", 901, 812, 9.5, 1, D], ["Team Lead: 186", 912, 812, 9.5, 1, D],
	["Engineering", 951, 812, 9.5, 1, D], ["Team Lead: 218", 963, 812, 9.5, 1, D],
	["Engineering", 994, 812, 9.5, 1, D], ["Team Lead: 134", 1006, 812, 9.5, 1, D],
	["Engineering Team Le...", 1024, 811, 7, 1, D, .6],
	["Engineering", 1041, 812, 9.5, 1, D], ["Team Lead: 140", 1052, 812, 9.5, 1, D],
	["Engineering", 1077, 812, 9.5, 1, D], ["Team Lead: 144", 1090, 812, 9.5, 1, D],
	["Account Lead: 63", 1171, 812, 9.5, 1, D],
	["Engineering Manager:", 895, 909, 6.5, 1, D, .6], ["Engineering Manager:", 910, 909, 6.5, 1, D, .6],
	["Engineering Manager:", 937, 909, 6.5, 1, D, .6], ["Engineering Manager:", 1074, 909, 6.5, 1, D, .6],
	["Engineer: 59", 1059, 910, 9.5, 1, D]
]

for (var n = 0; n < labels.length; n++) {
	var t = labels[n]
	var rot = t[4] ? ' transform="rotate(-90 ' + t[1] + " " + t[2] + ')"' : ""
	var op = t[6] ? ' opacity="' + t[6] + '"' : ""
	html += '<text x="' + t[1] + '" y="' + t[2] + '" font-size="' + t[3] + '" fill="' + t[5] + '" text-anchor="middle" dominant-baseline="central"' + rot + op + ">" + t[0].replace("&", "&amp;") + "</text>"
}

document.getElementById("icicle").innerHTML = html
```
